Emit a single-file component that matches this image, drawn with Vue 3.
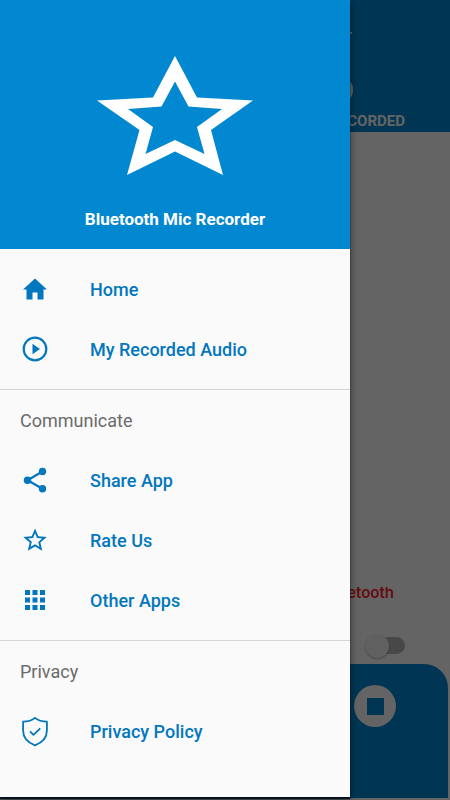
<script setup>
import { ref } from 'vue'

const bluetoothOn = ref(false)

const groups = [
  {
    id: 'main',
    title: '',
    items: [
      { label: 'Home', icon: 'home' },
      { label: 'My Recorded Audio', icon: 'play' },
    ],
  },
  {
    id: 'communicate',
    title: 'Communicate',
    items: [
      { label: 'Share App', icon: 'share' },
      { label: 'Rate Us', icon: 'star' },
      { label: 'Other Apps', icon: 'grid' },
    ],
  },
  {
    id: 'privacy',
    title: 'Privacy',
    items: [{ label: 'Privacy Policy', icon: 'shield' }],
  },
]
</script>

<template>
  <div class="screen">
    <main class="page">
      <header class="topbar">
        <span class="topbar-title">Recorder</span>
        <a class="recorded" href="#recorded">
          <span class="recorded-dot"></span>
          <span>RECORDED</span>
        </a>
      </header>
      <section class="body">
        <label class="bt-label" for="bt-switch">Bluetooth</label>
        <input id="bt-switch" v-model="bluetoothOn" class="switch" type="checkbox" />
      </section>
      <footer class="controls">
        <button class="stop" type="button" aria-label="Stop">
          <span class="stop-square"></span>
        </button>
      </footer>
    </main>
    <div class="scrim"></div>
    <aside class="drawer">
      <header class="drawer-head">
        <svg class="logo" viewBox="0 0 156 119" aria-hidden="true">
          <path
            fill="#fff"
            fill-rule="evenodd"
            d="M78 0L100 41.500L156 44.500L114 74L126 119L78 95.500L30 119L42.500 74L0 44.500L56 41.500ZM78 25.500L64.500 50.500L31 53L56 71L48.500 98L78 84L107.500 98L100 71L125 53L91.500 50.500Z"
          />
        </svg>
        <h1 class="app-name">Bluetooth Mic Recorder</h1>
      </header>
      <nav>
        <section v-for="g in groups" :key="g.id" class="group">
          <h2 v-if="g.title" class="group-title">{{ g.title }}</h2>
          <a v-for="item in g.items" :key="item.label" class="item" :href="'#' + item.icon">
            <svg class="icon" viewBox="0 0 30 30" aria-hidden="true">
              <path
                v-if="item.icon === 'home'"
                fill="currentColor"
                d="M12.500 24.500V17.500H17.500V24.500H23.500V14.500H27L15 3.500L3 14.500H6.500V24.500Z"
              />
              <template v-else-if="item.icon === 'play'">
                <circle cx="15" cy="14" r="11.300" fill="none" stroke="currentColor" stroke-width="2.200" />
                <path fill="currentColor" d="M12.500 8.800V19.200L20 14Z" />
              </template>
              <template v-else-if="item.icon === 'share'">
                <path d="M22.500 5.500L7.500 14.200L22.500 22.800" fill="none" stroke="currentColor" stroke-width="2.300" />
                <circle cx="22.500" cy="5.500" r="3.700" fill="currentColor" />
                <circle cx="7.500" cy="14.200" r="3.700" fill="currentColor" />
                <circle cx="22.500" cy="22.800" r="3.700" fill="currentColor" />
              </template>
              <path
                v-else-if="item.icon === 'star'"
                transform="translate(1 .2) scale(1.17)"
                fill="currentColor"
                d="M22 9.240l-7.190-.620L12 2 9.190 8.630 2 9.240l5.460 4.730L5.820 21 12 17.270 18.180 21l-1.630-7.030L22 9.240zM12 15.400l-3.760 2.270 1-4.280-3.320-2.880 4.380-.380L12 6.100l1.710 4.040 4.380.380-3.320 2.880 1 4.280L12 15.400z"
              />
              <path
                v-else-if="item.icon === 'grid'"
                fill="currentColor"
                d="M5 4h5v5H5zM12.500 4h5v5h-5zM20 4h5v5h-5zM5 11.500h5v5H5zM12.500 11.500h5v5h-5zM20 11.500h5v5h-5zM5 19h5v5H5zM12.500 19h5v5h-5zM20 19h5v5h-5z"
              />
              <g v-else fill="none" stroke="currentColor" stroke-width="1.800" stroke-linejoin="round" stroke-linecap="round">
                <path d="M15 .9C12 3.300 8 4.600 3.100 4.700V13.500C3.100 20.500 7.500 25.500 15 28.300C22.500 25.500 26.900 20.500 26.900 13.500V4.700C22 4.600 18 3.300 15 .9Z" />
                <path d="M10.500 14.800L13.500 17.800L19.700 11.800" />
              </g>
            </svg>
            <span class="item-label">{{ item.label }}</span>
          </a>
        </section>
      </nav>
    </aside>
  </div>
</template>

<style>
body {
  background: #646464;
}
</style>

<style scoped>
.screen {
  position: relative;
  display: flex;
  min-height: 100vh;
  overflow: hidden;
  font-family: Roboto, "Liberation Sans", sans-serif;
}
.page {
  flex: 1;
  display: flex;
  flex-direction: column;
  background: #fafafa;
}
.topbar {
  display: flex;
  flex-direction: column;
  align-items: flex-end;
  gap: 28px;
  padding: 24px 45px 0 0;
  height: 108px;
  background: #0288d1;
  color: #fafafa;
}
.topbar-title {
  margin-right: 53px;
  font-size: 20px;
  line-height: 24px;
  font-weight: 500;
}
.recorded {
  display: flex;
  flex-direction: column;
  align-items: flex-end;
  gap: 8px;
  font-size: 15px;
  line-height: 18px;
  font-weight: 700;
  color: inherit;
  text-decoration: none;
}
.recorded-dot {
  width: 28px;
  height: 28px;
  margin-right: 52px;
  border-radius: 50%;
  background: #fafafa;
}
.body {
  flex: 1;
  display: flex;
  flex-direction: column;
  align-items: flex-end;
  justify-content: flex-end;
  gap: 28px;
  padding: 0 45px 6px 0;
}
.bt-label {
  margin-right: 11px;
  font-family: Inter, Roboto, sans-serif;
  font-size: 15px;
  line-height: 24px;
  font-weight: 600;
  color: #fa1e28;
}
.switch {
  appearance: none;
  display: flex;
  align-items: center;
  width: 40px;
  height: 17px;
  margin: 4px 0;
  border-radius: 9px;
  background: linear-gradient(90deg, transparent 8px, #b4b4b4 8px);
}
.switch::before {
  content: "";
  flex: none;
  width: 24px;
  height: 24px;
  border-radius: 50%;
  background: #f1f1f1;
  box-shadow: 0 1px 2px rgba(0, 0, 0, 0.3);
}
.switch:checked {
  justify-content: flex-end;
}
.controls {
  display: flex;
  justify-content: flex-end;
  height: 134px;
  margin: 0 2px 2px 0;
  padding: 21px 52px 0 0;
  box-sizing: border-box;
  border-radius: 0 24px 0 0;
  background: #0288d1;
}
.stop {
  display: grid;
  place-items: center;
  width: 42px;
  height: 42px;
  padding: 0;
  border: 0;
  border-radius: 50%;
  background: #fafafa;
}
.stop-square {
  width: 17px;
  height: 17px;
  background: #0288d1;
}
.scrim {
  position: absolute;
  inset: 0;
  background: rgba(0, 0, 0, 0.6);
}
.drawer {
  position: absolute;
  top: 0;
  bottom: 3px;
  left: 0;
  width: calc(100% - 100px);
  background: #fafafa;
  box-shadow: 0 2px 8px rgba(0, 0, 0, 0.5), 0 2px 1px #0a1a30;
}
.drawer-head {
  display: flex;
  flex-direction: column;
  align-items: center;
  gap: 32px;
  padding: 56px 16px 18px;
  background: #0288d1;
}
.logo {
  width: 156px;
  height: 119px;
}
.app-name {
  margin: 0;
  font-size: 17px;
  line-height: 24px;
  font-weight: 700;
  color: #fff;
}
.group {
  padding-bottom: 9px;
}
.group:first-child {
  padding-top: 11px;
}
.group + .group {
  border-top: 1px solid #d5d5d5;
}
.group-title {
  margin: 0;
  padding: 1px 20px 0;
  font-size: 18px;
  line-height: 60px;
  font-weight: 400;
  color: #6b6b6b;
}
.item {
  display: flex;
  align-items: center;
  gap: 40px;
  height: 60px;
  padding: 0 20px;
  font-size: 18px;
  font-weight: 500;
  color: #0277bd;
  text-decoration: none;
}
.item-label {
  padding-bottom: 2px;
}
.icon {
  width: 30px;
  height: 30px;
}
</style>
